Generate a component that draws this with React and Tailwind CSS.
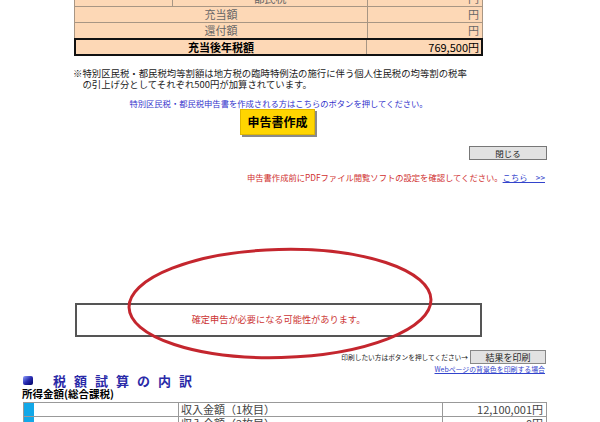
import React from 'react';

const peach = 'bg-[#fdd8b6]';

const TopTable = () => (
    <div className="ml-[74px] w-[409px] -mt-[9px] text-[11px] leading-[14px] text-[#666]">
        <div className={`flex h-[16px] border-l border-r border-b border-[#a89684] ${peach}`}>
            <div className="w-[98px] border-r border-[#a89684]"></div>
            <div className="w-[195px] border-r border-[#a89684] text-center">都民税</div>
            <div className="flex-1 text-right pr-[3px]">円</div>
        </div>
        <div className={`flex h-[16px] border-l border-r border-b border-[#a89684] ${peach}`}>
            <div className="w-[293px] border-r border-[#a89684] text-center">充当額</div>
            <div className="flex-1 text-right pr-[3px]">円</div>
        </div>
        <div className={`flex h-[15px] border-l border-r border-[#a89684] ${peach}`}>
            <div className="w-[293px] border-r border-[#a89684] text-center">還付額</div>
            <div className="flex-1 text-right pr-[3px]">円</div>
        </div>
        <div className={`flex h-[18px] border-2 border-[#111] ${peach} text-black`}>
            <div className="w-[291px] border-r border-[#a89684] text-center font-bold">充当後年税額</div>
            <div className="flex-1 text-right pr-[2px]">769,500円</div>
        </div>
    </div>
);

const BottomTable = () => (
    <div className="mt-[3px] ml-[23px] w-[524px] border-t border-l border-r border-[#999] text-[11px] leading-[13px] text-[#444]">
        <div className="flex h-[14px] border-b border-[#999]">
            <div className="w-[10px] bg-[#12a8e8]"></div>
            <div className="w-[145px] border-r border-[#999]"></div>
            <div className="w-[264px] border-r border-[#999] pl-[2px]">収入金額（1枚目）</div>
            <div className="flex-1 text-right pr-[3px]">12,100,001円</div>
        </div>
        <div className="flex h-[14px]">
            <div className="w-[10px] bg-[#12a8e8]"></div>
            <div className="w-[145px] border-r border-[#999]"></div>
            <div className="w-[264px] border-r border-[#999] pl-[2px]">収入金額（2枚目）</div>
            <div className="flex-1 text-right pr-[3px]">0円</div>
        </div>
    </div>
);

export default function App() {
    return (
        <div className="relative w-[600px] h-[422px] overflow-hidden bg-white font-['Noto_Sans_CJK_JP','Liberation_Sans',sans-serif]">
            <TopTable />

            {/* footnote */}
            <div className="mt-[12px] ml-[73px] text-[9.4px] leading-[11px] text-[#222] whitespace-nowrap">
                <div>※特別区民税・都民税均等割額は地方税の臨時特例法の施行に伴う個人住民税の均等割の税率</div>
                <div>　の引上げ分としてそれぞれ500円が加算されています。</div>
            </div>

            <div className="mt-[8px] ml-[74px] w-[409px] text-center text-[8.3px] leading-[11px] text-[#3333cc] whitespace-nowrap">
                特別区民税・都民税申告書を作成される方はこちらのボタンを押してください。
            </div>

            <div className="flex justify-center ml-[74px] w-[407px]">
                <button className="w-[75px] h-[26px] bg-[#ffd500] border border-[#e0b800] shadow-[2px_2px_0_#8a8a8a] text-[12px] font-bold text-black leading-none">
                    申告書作成
                </button>
            </div>

            <div className="mt-[11px] flex justify-end pr-[53px]">
                <button className="w-[78px] h-[14px] bg-[#e2e2e2] border border-[#777] text-[8.5px] leading-none text-[#222]">
                    閉じる
                </button>
            </div>

            <div className="mt-[12px] flex justify-end pr-[55px] text-[8.3px] leading-[11px] whitespace-nowrap">
                <span className="text-[#d03030]">申告書作成前にPDFファイル閲覧ソフトの設定を確認してください。</span>
                <span className="text-[#3344cc] underline">こちら　&gt;&gt;</span>
            </div>

            <div className="mt-[120px] ml-[75px] w-[407px] h-[34px] border-2 border-[#555] flex items-center justify-center text-[9.2px] text-[#cc3333]">
                確定申告が必要になる可能性があります。
            </div>

            <div className="mt-[13px] flex justify-end items-center pr-[54px] gap-[2px]">
                <span className="text-[6.7px] leading-none text-[#222] whitespace-nowrap">印刷したい方はボタンを押してください→</span>
                <button className="w-[76px] h-[14px] bg-[#e2e2e2] border border-[#888] text-[9px] leading-none text-[#222]">
                    結果を印刷
                </button>
            </div>

            <div className="mt-[1px] flex justify-end pr-[55px]">
                <span className="text-[6.9px] leading-[8px] text-[#3344cc] underline whitespace-nowrap">Webページの背景色を印刷する場合</span>
            </div>

            <div className="mt-[1px] ml-[23px] flex items-center h-[13px]">
                <div className="w-[10px] h-[9px] rounded-[2px] bg-gradient-to-br from-[#9aa0ff] via-[#2a2ab0] to-[#000060]"></div>
                <span className="ml-[20px] text-[13px] leading-[13px] font-bold tracking-[8px] text-[#2a2aa8] whitespace-nowrap">税額試算の内訳</span>
            </div>

            <div className="mt-[1px] ml-[22px] text-[10.5px] leading-[11px] font-bold text-black whitespace-nowrap">所得金額(総合課税)</div>

            <BottomTable />

            {/* hand-drawn red ellipse over the box */}
            <svg className="absolute left-[124px] top-[245px]" width="312" height="117" viewBox="0 0 312 117">
                <ellipse cx="156" cy="58.5" rx="151" ry="54" fill="none" stroke="#c4262e" strokeWidth="3" transform="rotate(-1.5 156 58.5)" />
            </svg>
        </div>
    );
}
